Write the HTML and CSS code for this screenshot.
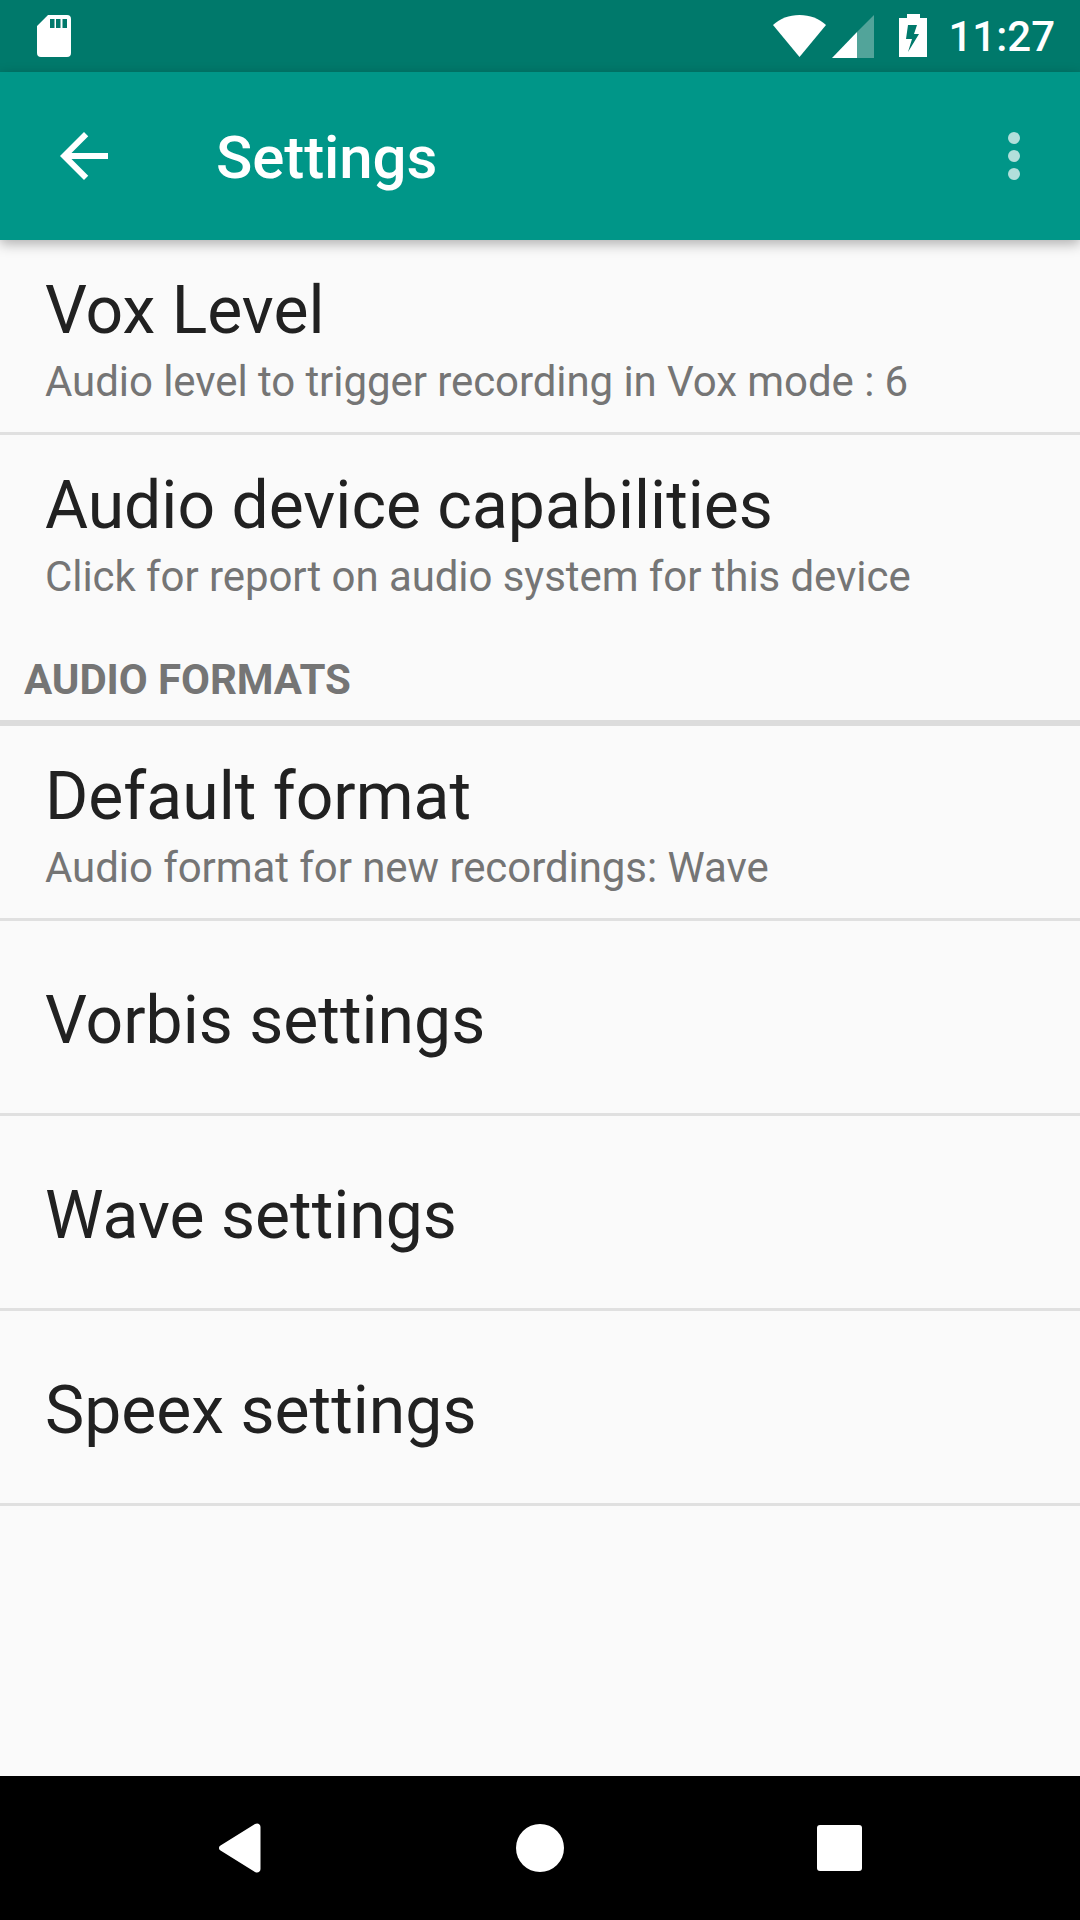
FILE: index.html
```html
<!DOCTYPE html>
<html lang="en">
<head>
<meta charset="utf-8">
<title>Settings</title>
<link rel="stylesheet" href="styles.css">
</head>
<body>
<div class="screen">
  <header class="statusbar">
    <svg class="sd" width="34" height="42" viewBox="0 0 34 42"><path fill="#fff" fill-rule="evenodd" d="M11 0H30a4 4 0 0 1 4 4V38a4 4 0 0 1-4 4H4a4 4 0 0 1-4-4V11ZM13 4V13H17.500V4ZM19 4V13H23.500V4ZM25.500 4V13H30V4Z"/></svg>
    <div class="status-right">
      <svg class="wifi" width="53" height="42" viewBox="0 0 53 42"><path fill="#fff" d="M0 10C7 3.500 16 0 26.500 0S46 3.500 53 10L26.500 42Z"/></svg>
      <svg class="signal" width="42" height="43" viewBox="0 0 42 43"><path fill="#fff" fill-opacity=".32" d="M42 0V43H25V17Z"/><path fill="#fff" d="M25 17V43H0Z"/></svg>
      <svg class="battery" width="28" height="44" viewBox="0 0 28 44"><path fill="#fff" fill-rule="evenodd" d="M8 0H21V4H28V43H0V4H8ZM9 11L7 25H13L9 38L20 20H15L18 11Z"/></svg>
      <span class="clock">11:27</span>
    </div>
  </header>
  <div class="toolbar">
    <svg class="back" width="48" height="48" viewBox="4 4 16 16"><path fill="#fff" d="M20 11H7.830l5.590-5.590L12 4l-8 8 8 8 1.410-1.410L7.830 13H20v-2z"/></svg>
    <h1 class="title">Settings</h1>
    <div class="overflow"><i></i><i></i><i></i></div>
  </div>
  <main class="list">
    <div class="row"><div class="row-title">Vox Level</div><div class="row-sub">Audio level to trigger recording in Vox mode : 6</div></div>
    <div class="row last"><div class="row-title">Audio device capabilities</div><div class="row-sub">Click for report on audio system for this device</div></div>
    <div class="category">AUDIO FORMATS</div>
    <div class="row"><div class="row-title">Default format</div><div class="row-sub">Audio format for new recordings: Wave</div></div>
    <div class="row single"><div class="row-title">Vorbis settings</div></div>
    <div class="row single"><div class="row-title">Wave settings</div></div>
    <div class="row single"><div class="row-title">Speex settings</div></div>
  </main>
  <nav class="navbar">
    <svg width="44" height="50" viewBox="0 0 44 50"><path fill="#fff" d="M1.500 22.500L36 1c2.500-1.500 5.500 0 5.500 3V46c0 3-3 4.500-5.500 3L1.500 27.500c-2-1.200-2-3.800 0-5Z"/></svg>
    <span class="nav-home"></span>
    <span class="nav-recent"></span>
  </nav>
</div>
</body>
</html>
```
FILE: styles.css
```css
* { box-sizing: border-box; }
html, body { margin: 0; padding: 0; }
body { font-family: Roboto, sans-serif; background: #fafafa; }
.screen { width: 1080px; height: 1920px; display: flex; flex-direction: column; overflow: hidden; }
.statusbar { height: 72px; background: #00796b; display: flex; align-items: center; justify-content: space-between; padding: 0 25px 0 37px; flex: none; }
.status-right { display: flex; align-items: center; }
.wifi { margin-right: 6px; }
.signal { margin-right: 25px; }
.battery { margin-right: 21px; }
.clock { color: #fff; font-size: 42px; font-weight: 500; }
.toolbar { height: 168px; background: #009688; display: flex; align-items: center; padding: 0 60px; flex: none; box-shadow: 0 4px 12px rgba(0,0,0,.3); position: relative; z-index: 1; }
.back { flex: none; }
.title { margin: 3px 0 0 108px; color: #fff; font-size: 60px; font-weight: 500; letter-spacing: -.1px; flex: 1; }
.overflow { display: flex; flex-direction: column; gap: 6px; }
.overflow i { display: block; width: 12px; height: 12px; border-radius: 50%; background: #b2dfdb; }
.list { flex: 1; }
.row { height: 195px; border-bottom: 3px solid #e0e0e0; padding: 32px 45px 0; }
.row.single { padding-top: 61px; }
.row.last { border-bottom: 0; }
.row-title { font-size: 66px; color: #212121; line-height: 78px; letter-spacing: .02px; }
.row-sub { font-size: 42px; color: #757575; line-height: 54px; margin-top: 5px; letter-spacing: -.07px; }
.category { height: 96px; border-bottom: 6px solid #dcdcdc; padding: 25px 24px 0; font-size: 42px; font-weight: 700; color: #757575; letter-spacing: -.08px; }
.navbar { height: 144px; background: #000; display: flex; align-items: center; justify-content: space-between; padding: 0 218px 0 219px; flex: none; }
.nav-home { width: 48px; height: 48px; border-radius: 50%; background: #fff; }
.nav-recent { width: 45px; height: 46px; border-radius: 3px; background: #fff; }
```
